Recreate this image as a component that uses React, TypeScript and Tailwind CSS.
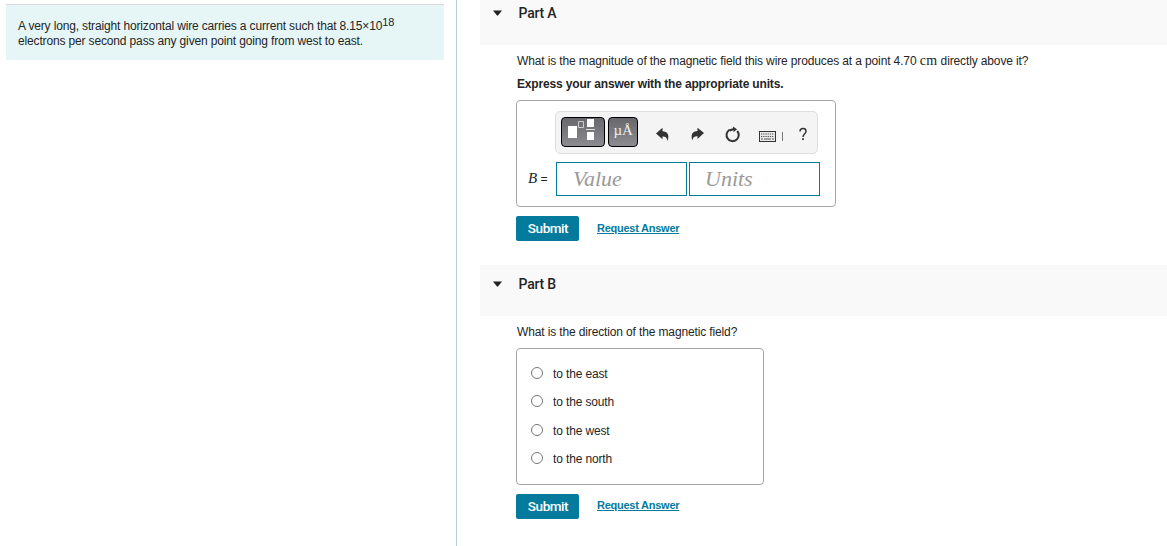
import { ReactNode } from "react";

const options = ["to the east", "to the south", "to the west", "to the north"];

interface PartHeaderProps {
  title: string;
  className?: string;
}

const PartHeader = (props: PartHeaderProps) => {
  return (
    <div className={`${props.className ?? ""} flex bg-[#f9f9f9] pl-[13px]`}>
      <svg className="mt-[16px] h-[6px] w-[9px]" viewBox="0 0 9 6">
        <path d="M0 .5h9L5.2 5.3q-.7.7-1.4 0z" fill="#222" />
      </svg>
      <h2 className="ml-4 mt-[9px] pl-[0.5px] font-[Roboto] text-[14px] leading-5 font-medium tracking-[-0.2px] text-[#252525]">
        {props.title}
      </h2>
    </div>
  );
};

const Actions = (props: { linkClassName: string }) => {
  return (
    <div className="mt-[9px] flex h-[25px] items-start">
      <button className="h-[25px] w-[63px] rounded-[2px] bg-[#047a9c] pb-[2px] pl-px font-[Roboto] text-[13.5px] leading-5 font-medium tracking-[-0.45px] text-white">
        Submit
      </button>
      <a
        href="#"
        className={`${props.linkClassName} ml-[18px] text-[11px] leading-[15px] font-bold tracking-[-0.25px] whitespace-nowrap text-[#047a9c] underline`}
      >
        Request Answer
      </a>
    </div>
  );
};

const DarkButton = (props: { className: string; children: ReactNode }) => {
  return (
    <button
      className={`${props.className} h-[30px] rounded-[4px] border border-black bg-linear-to-b from-[#67676c] to-[#8b8b90]`}
    >
      {props.children}
    </button>
  );
};

const Toolbar = () => {
  return (
    <div className="ml-[38px] flex h-[43px] w-[263px] rounded-[5px] border border-[#dedede] bg-[#f4f4f4] pt-[5px] pl-[5px]">
      <DarkButton className="w-[44px]">
        <svg className="h-[28px] w-[42px]" viewBox="0 0 42 28">
          <path d="M6 8h9v12H6zM25 1h7v8h-7zM25 14h7v8h-7z" fill="#fff" />
          <path d="M24 11.5h9" stroke="#ddd" />
          <path d="M16.5 3.5h5v6h-5z" fill="none" stroke="#ccc" />
        </svg>
      </DarkButton>
      <DarkButton className="ml-[3px] w-[30px] pb-[3px] font-['Liberation_Serif'] text-[15px] leading-[23px] tracking-[-0.2px] text-[#eee]">
        µÅ
      </DarkButton>
      <svg className="h-[32px] w-[174px]" viewBox="0 0 174 32">
        <path
          d="M18 16.5L24.5 10.8V14.3C29.5 14.5 31.5 17.5 29.8 24 29 20.5 27.5 19.5 24.5 19.4V22.3Z"
          fill="#333"
        />
        <path
          d="M66 16L59.5 10.8V14C54.5 14.3 52.5 17.5 54.3 23.5 55 20 56.5 19.2 59.5 19.2V22Z"
          fill="#333"
        />
        <path
          d="M91.2 13A6.1 6.1 0 1 0 99.2 14"
          fill="none"
          stroke="#333"
          strokeWidth="2"
        />
        <path
          d="M90.5 12.4L95 11.2V9.5L99 12.3 95.5 15.2V13.2L92 14.5z"
          fill="#333"
        />
        <rect
          x="121.5"
          y="14.5"
          width="16"
          height="10"
          fill="#e9e9e9"
          stroke="#333"
        />
        <path
          d="M123 17h13M123 19.5h13"
          stroke="#555"
          strokeDasharray="1.3 .9"
        />
        <path d="M123 22h2M126 22h7M134 22h2" stroke="#555" />
        <path d="M144.5 15v9" stroke="#777" />
        <path
          d="M162 14.4Q162 11.5 165 11.5T168 14.1Q168 15.5 166.5 17T165 20"
          fill="none"
          stroke="#333"
          strokeWidth="1.5"
        />
        <path d="M164.1 21.3h1.8v1.8h-1.8z" fill="#333" />
      </svg>
    </div>
  );
};

const App = () => {
  return (
    <div className="flex h-[546px] overflow-hidden bg-white font-['Liberation_Sans',Arial,sans-serif] text-[12px] leading-[15px] tracking-[-0.135px] text-[#252525]">
      <div className="w-[457px] shrink-0 border-r border-[#b5c9d6] pt-1 pl-[6px]">
        <div className="h-[56px] w-[438px] border-t border-[#dadada] bg-[#e6f6f7] pt-[14px] pl-3 whitespace-nowrap">
          <p className="tracking-[-0.15px]">
            A very long, straight horizontal wire carries a current such that
            8.15×10
            <sup className="-top-[4px] text-[11px] leading-none">18</sup>
          </p>
          <p className="tracking-[-0.15px]">
            electrons per second pass any given point going from west to east.
          </p>
        </div>
      </div>
      <div className="flex-1 pl-[23px]">
        <PartHeader title="Part A" className="-mt-[6px] h-[51px]" />
        <div className="pl-[36px]">
          <p className="mt-[9px] pl-px tracking-[-0.13px] whitespace-nowrap">
            What is the magnitude of the magnetic field this wire produces at a
            point 4.70{" "}
            <span className="font-['Liberation_Serif'] text-[14px] leading-none tracking-[0.3px]">
              cm
            </span>{" "}
            directly above it?
          </p>
          <p className="mt-2 pl-px font-bold tracking-[-0.165px]">
            Express your answer with the appropriate units.
          </p>
          <div className="mt-2 h-[107px] w-[320px] rounded-[4px] border border-[#a6a6a6] pt-[10px]">
            <Toolbar />
            <div className="mt-2 flex h-[34px] items-center tracking-normal">
              <span className="w-[39px] pl-[11px] whitespace-nowrap">
                <i className="font-['Liberation_Serif'] text-[15px]">B</i> =
              </span>
              <div className="h-[34px] w-[131px] border border-[#047a9c] pl-4 font-['Liberation_Serif'] text-[22px] leading-[32px] text-[#999] italic">
                Value
              </div>
              <div className="ml-[2px] h-[34px] w-[131px] border border-[#047a9c] pl-[15px] font-['Liberation_Serif'] text-[22px] leading-[32px] text-[#999] italic">
                Units
              </div>
            </div>
          </div>
          <Actions linkClassName="mt-[5px]" />
        </div>
        <PartHeader title="Part B" className="mt-6 h-[51px]" />
        <div className="pl-[36px]">
          <p className="mt-[9px] pl-px">
            What is the direction of the magnetic field?
          </p>
          <div className="mt-2 flex h-[137px] w-[248px] flex-col gap-[13.4px] rounded-[4px] border border-[#a6a6a6] pt-[17px] pl-[14px]">
            {options.map((option) => (
              <label key={option} className="flex items-start">
                <span className="mt-px size-3 rounded-full border border-[#777] bg-white" />
                <span className="ml-[10px] pt-px leading-[14px]">{option}</span>
              </label>
            ))}
          </div>
          <Actions linkClassName="mt-1" />
        </div>
      </div>
    </div>
  );
};

export default App;
